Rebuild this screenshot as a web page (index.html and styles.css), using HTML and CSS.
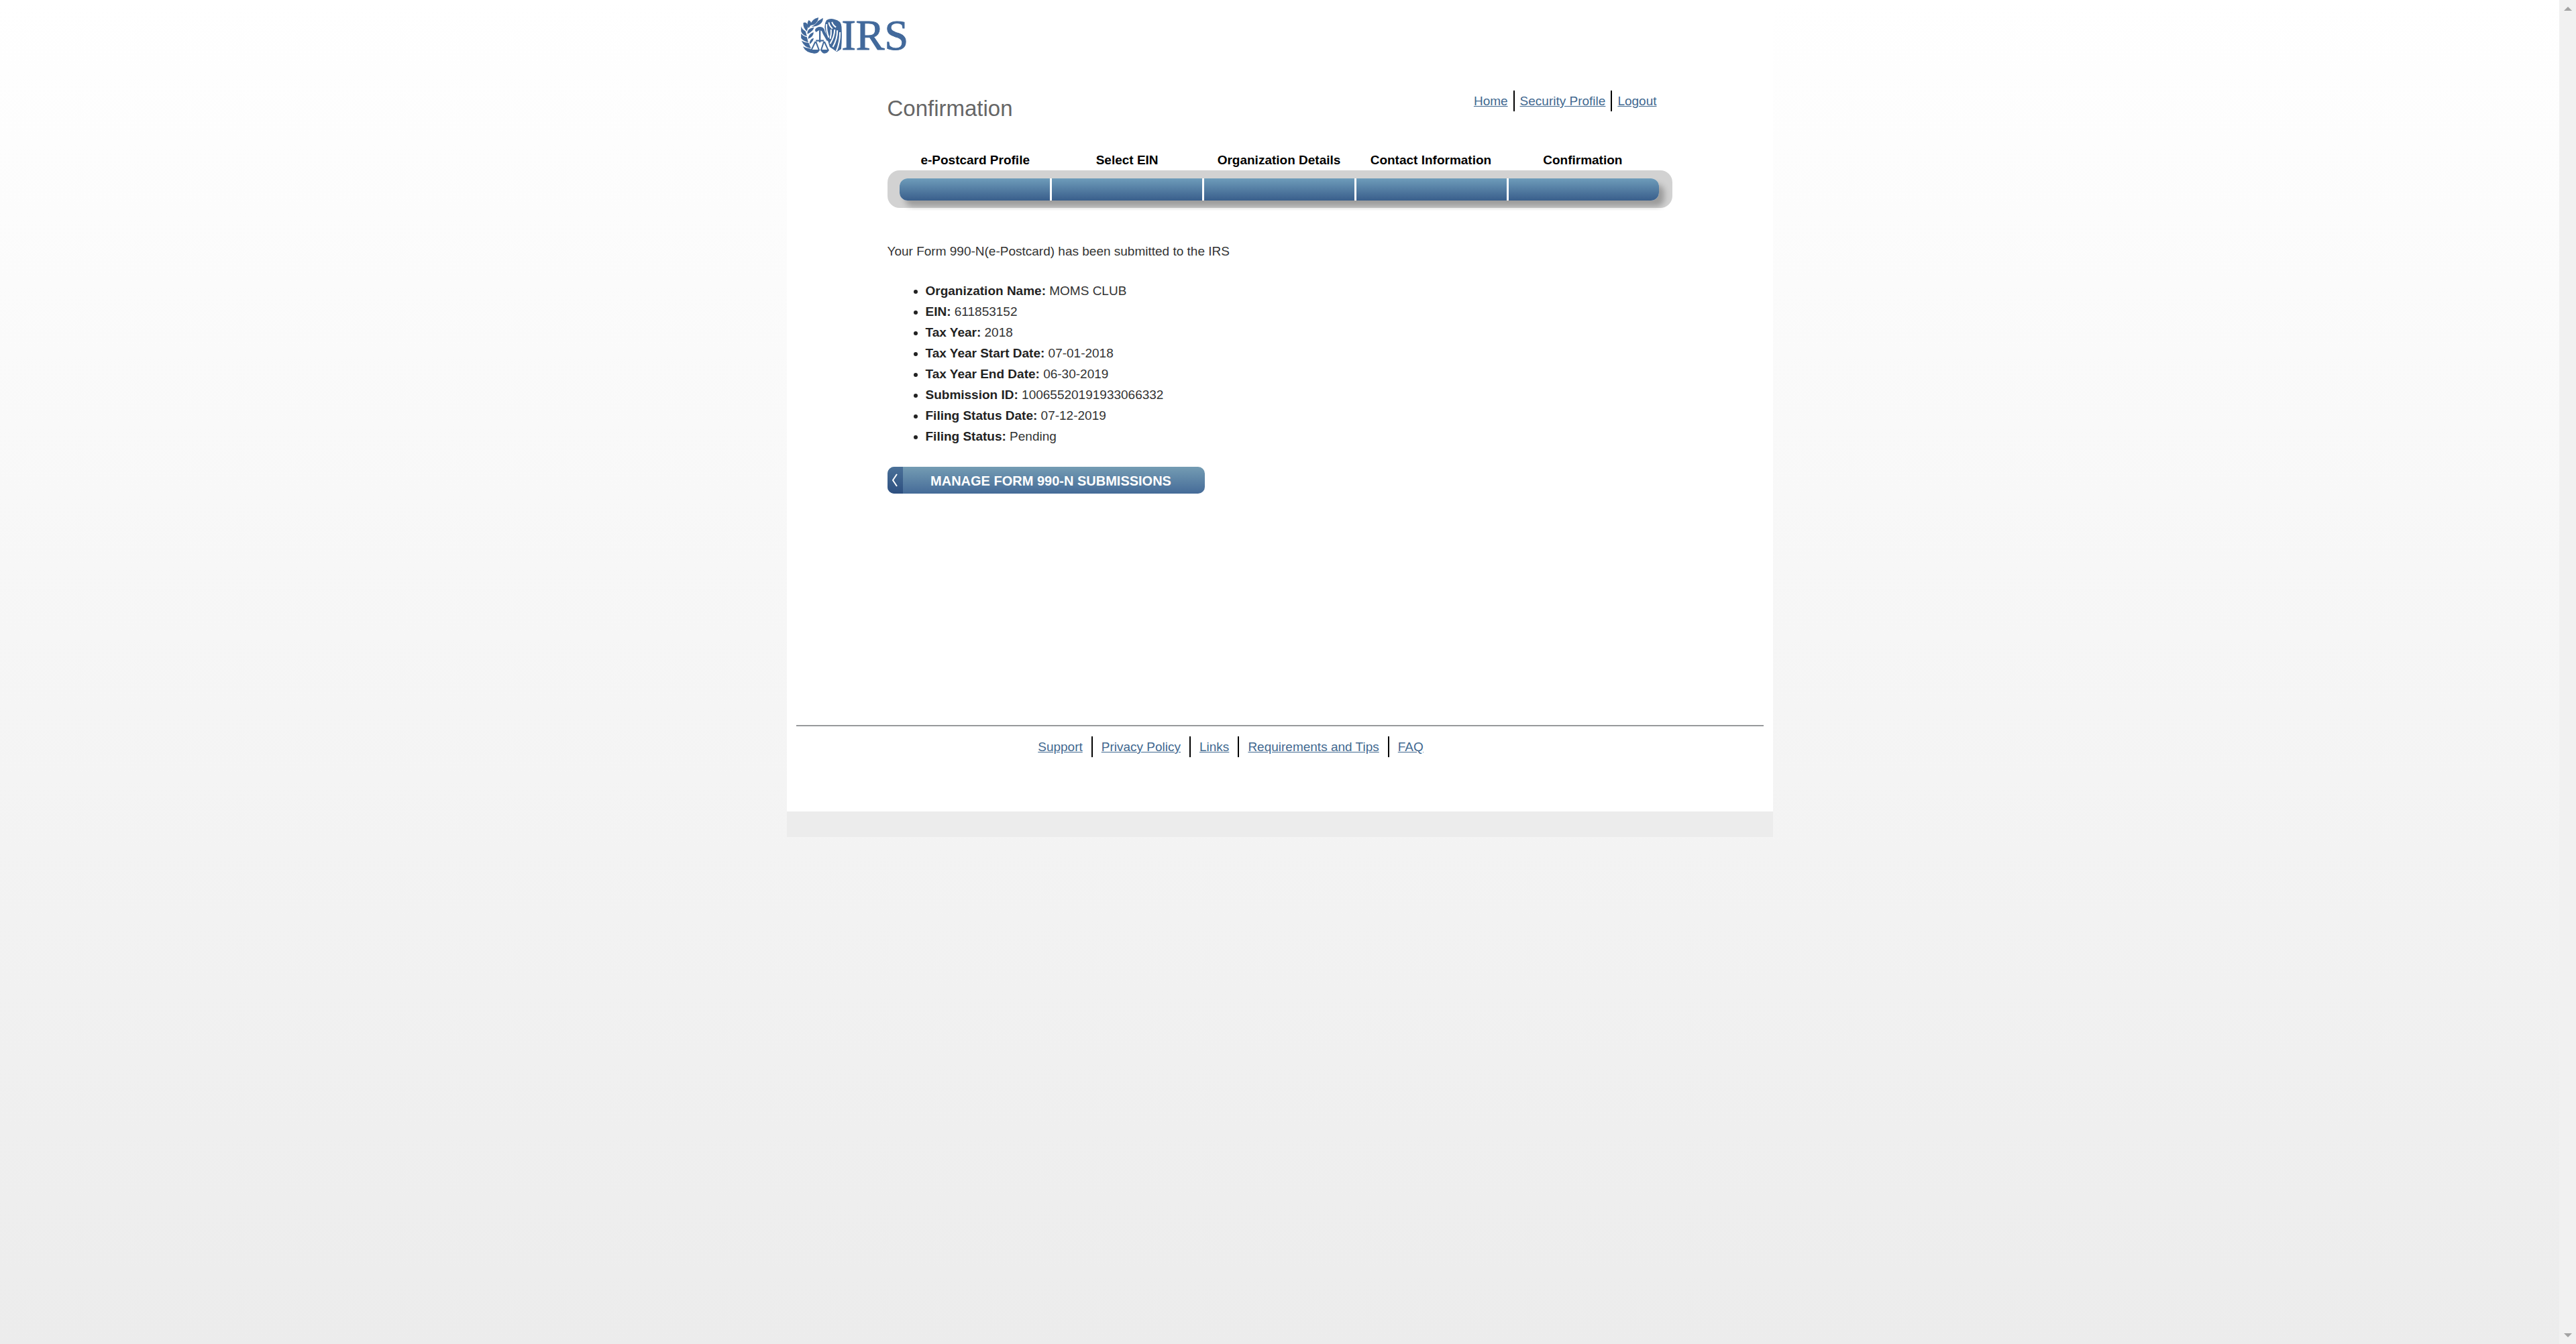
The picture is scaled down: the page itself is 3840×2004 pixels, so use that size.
FILE: index.html
```html
<!DOCTYPE html>
<html lang="en">
<head>
<meta charset="utf-8">
<title>Form 990-N Confirmation</title>
<link rel="stylesheet" href="styles.css">
</head>
<body>
<div class="viewport">
  <div class="page">
    <header class="masthead">
      <a class="logo" href="#" aria-label="IRS home">
        <svg class="emblem" viewBox="0 0 182 162" aria-hidden="true">
          <g fill="#42699b">
            <path d="M0 40 Q6 56 20 62 L26 84 Q4 78 0 62Z"/>
            <path d="M0 72 Q8 84 26 88 L32 112 Q8 104 0 92Z"/>
            <path d="M2 104 Q16 112 34 114 L44 138 Q14 134 2 104Z"/>
            <path d="M8 130 Q22 138 42 140 L60 161 Q22 160 8 130Z"/>
            <path d="M10 24 Q26 18 32 40 L26 62 Q8 48 10 24Z"/>
            <path d="M34 12 Q48 18 44 34 L34 48 Q22 30 34 12Z"/>
            <path d="M42 36 Q44 8 78 0 Q76 22 58 32Z"/>
            <path d="M46 42 Q66 32 76 16 L98 2 Q98 38 46 42Z"/>
            <path d="M28 74 Q26 48 58 44 Q54 62 28 74Z"/>
            <path d="M32 96 Q30 76 56 66 Q56 86 32 96Z"/>
            <path d="M38 120 Q36 98 56 92 Q56 106 38 120Z"/>
            <path d="M62 56 Q68 42 84 42 Q104 43 106 62 L124 100 L116 106 L98 74 L92 60 L80 58 L66 66Z"/>
            <path d="M106 48 Q104 26 114 12 Q130 2 148 8 Q180 14 181 42 Q184 100 179 142 L160 154 L128 132 L116 92Z"/>
            <path d="M40 144 H84 Q78 162 60 161 Q46 158 40 144Z"/>
            <path d="M86 144 H126 Q120 161 104 161 Q92 160 86 144Z"/>
          </g>
          <g fill="none" stroke="#42699b" stroke-width="7">
            <path d="M84 58 V112 M66 104 H102"/>
            <path d="M64 108 L45 148 M66 108 L81 148 M102 108 L89 148 M104 108 L122 148" stroke-width="6"/>
          </g>
          <g fill="none" stroke="#ffffff" stroke-width="6">
            <path d="M114 30 Q112 62 124 90 M124 22 Q126 38 140 50 M138 20 Q142 34 156 44"/>
            <path d="M134 54 Q136 76 130 96 M150 54 Q150 84 130 118 M162 58 Q162 98 142 132 M174 66 Q174 112 158 150"/>
          </g>
        </svg>
        <span class="logo-text">IRS</span>
      </a>
    </header>

    <main class="content">
      <div class="title-row">
        <h1>Confirmation</h1>
        <nav class="links account-links" aria-label="Account">
          <a href="#">Home</a>
          <a href="#">Security Profile</a>
          <a href="#">Logout</a>
        </nav>
      </div>

      <section class="progress" aria-label="Progress">
        <ol class="step-names">
          <li>e-Postcard Profile</li>
          <li>Select EIN</li>
          <li>Organization Details</li>
          <li>Contact Information</li>
          <li>Confirmation</li>
        </ol>
        <div class="track">
          <div class="bar"><i></i><i></i><i></i><i></i><i></i></div>
        </div>
      </section>

      <p class="message">Your Form 990-N(e-Postcard) has been submitted to the IRS</p>

      <ul class="details">
        <li><b>Organization Name:</b> MOMS CLUB</li>
        <li><b>EIN:</b> 611853152</li>
        <li><b>Tax Year:</b> 2018</li>
        <li><b>Tax Year Start Date:</b> 07-01-2018</li>
        <li><b>Tax Year End Date:</b> 06-30-2019</li>
        <li><b>Submission ID:</b> 10065520191933066332</li>
        <li><b>Filing Status Date:</b> 07-12-2019</li>
        <li><b>Filing Status:</b> Pending</li>
      </ul>

      <button class="manage" type="button">
        <span class="manage-arrow"><svg viewBox="0 0 10 20" aria-hidden="true"><path d="M8 1 L2 10 L8 19"/></svg></span>
        <span class="manage-label">MANAGE FORM 990-N SUBMISSIONS</span>
      </button>
    </main>

    <footer class="footer">
      <nav class="links footer-links" aria-label="Footer">
        <a href="#">Support</a>
        <a href="#">Privacy Policy</a>
        <a href="#">Links</a>
        <a href="#">Requirements and Tips</a>
        <a href="#">FAQ</a>
      </nav>
    </footer>
    <div class="page-end"></div>
  </div>
</div>
<div class="scrollbar" aria-hidden="true">
  <svg viewBox="0 0 12 6"><path d="M0 6 L6 0 L12 6Z"/></svg>
  <svg viewBox="0 0 12 6"><path d="M0 0 L6 6 L12 0Z"/></svg>
</div>
</body>
</html>
```
FILE: styles.css
```css
* { box-sizing: border-box; }

body {
  margin: 0;
  min-height: 100vh;
  display: flex;
  background: linear-gradient(#ffffff, #ececec);
  font: 19px/31px "Liberation Sans", Arial, sans-serif;
  color: #333333;
}

h1, p, ul, ol { margin: 0; padding: 0; }

.viewport { flex: 1; }

.page {
  max-width: 1470px;
  margin: 0 auto;
  background: #ffffff;
}

.masthead { padding: 26px 21px 0; }

.logo {
  display: flex;
  width: fit-content;
  height: 54px;
  color: #42699b;
  text-decoration: none;
}
.emblem { width: 61px; height: 54px; }
.logo-text {
  font: 64px/54px "Liberation Serif", "Times New Roman", serif;
  -webkit-text-stroke: 1px #42699b;
}

.content { padding: 55px 150px 345px; }

.title-row {
  display: flex;
  justify-content: space-between;
  align-items: flex-start;
  padding-right: 23px;
}
h1 {
  padding-top: 7px;
  font-size: 33px;
  line-height: 40px;
  font-weight: normal;
  color: #666666;
}

.links { display: flex; }
.links a { color: #41688f; }
.links a + a { border-left: 2px solid #000000; }
.account-links a { padding: 0 8px; }
.account-links a:last-child { padding-right: 0; }
.footer-links a { padding: 0 13px; }

.progress { margin-top: 42px; }
.step-names {
  display: flex;
  padding: 0 20px 0 18px;
  line-height: 30px;
  list-style: none;
  font-weight: bold;
  color: #000000;
  text-align: center;
}
.step-names li { flex: 1; }

.track {
  position: relative;
  z-index: 0;
  height: 60px;
  padding: 12px 20px 0 18px;
  overflow: hidden;
}
.track::before {
  content: "";
  position: absolute;
  inset: 0 0 4px;
  z-index: -1;
  border-radius: 18px;
  background: #d2d2d2;
}
.bar {
  display: flex;
  gap: 3px;
  height: 33px;
  border-radius: 12px;
  background: #ffffff;
  box-shadow: 8px 9px 8px rgba(0, 0, 0, 0.26);
}
.bar i {
  flex: 1;
  background: linear-gradient(#6e9cba, #395e8b);
}
.bar i:first-child { border-radius: 12px 0 0 12px; }
.bar i:last-child { border-radius: 0 12px 12px 0; }

.message { margin-top: 45px; }

.details {
  margin-top: 28px;
  padding-left: 57px;
}
.details b { color: #222222; }
.details li::marker { color: #222222; }

.manage {
  display: flex;
  width: 473px;
  height: 40px;
  margin-top: 30px;
  padding: 0;
  overflow: hidden;
  border: 0;
  border-radius: 10px;
  background: linear-gradient(#749cb3, #456b98);
  color: #ffffff;
  font: bold 20px/42px "Liberation Sans", Arial, sans-serif;
}
.manage-arrow {
  display: flex;
  justify-content: center;
  align-items: center;
  width: 23px;
  height: 40px;
  background: linear-gradient(#4a7098, #2d4f80);
}
.manage-arrow svg {
  width: 10px;
  height: 20px;
  fill: none;
  stroke: #ffffff;
  stroke-width: 2;
}
.manage-label { flex: 1; padding-right: 8px; }

.footer {
  margin: 0 14px;
  padding: 15px 0 81px;
  border-top: 2px solid #97999b;
}
.footer-links { justify-content: center; padding-right: 146px; }

.page-end { height: 38px; background: #ececec; }

.scrollbar {
  display: flex;
  flex-direction: column;
  justify-content: space-between;
  align-items: center;
  width: 25px;
  padding: 10px 0;
  background: #f1f1f1;
}
.scrollbar svg { width: 12px; height: 6px; fill: #a3a3a3; }
```
